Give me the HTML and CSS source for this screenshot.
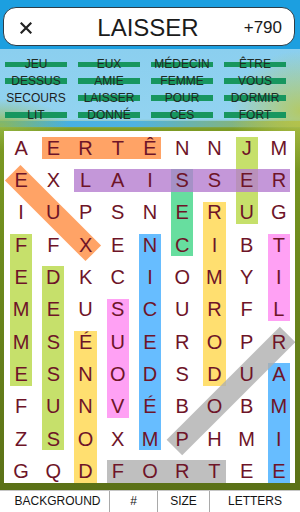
FILE: index.html
```html
<!DOCTYPE html>
<html lang="fr">
<head>
    <meta charset="UTF-8">
    <meta name="viewport" content="width=device-width, initial-scale=1.0">
    <title>Mots mêlés</title>
    <link rel="stylesheet" href="styles.css">
</head>
<body>
    <div class="app">
        <header class="top">
            <div class="pill">
                <span class="close">
                    <svg width="12" height="12" viewBox="0 0 12 12"><path d="M1.5 1.5 L10.5 10.5 M10.5 1.5 L1.5 10.5" stroke="#222" stroke-width="2.2" stroke-linecap="square"/></svg>
                </span>
                <span class="word">LAISSER</span>
                <span class="score">+790</span>
            </div>
        </header>

        <div class="scene">
            <section class="words">
                <span class="w found">JEU</span>
                <span class="w found">EUX</span>
                <span class="w found">MÉDECIN</span>
                <span class="w found">ÊTRE</span>
                <span class="w found">DESSUS</span>
                <span class="w found">AMIE</span>
                <span class="w found">FEMME</span>
                <span class="w found">VOUS</span>
                <span class="w">SECOURS</span>
                <span class="w found">LAISSER</span>
                <span class="w found">POUR</span>
                <span class="w found">DORMIR</span>
                <span class="w found">LIT</span>
                <span class="w found">DONNÉ</span>
                <span class="w found">CES</span>
                <span class="w found">FORT</span>
            </section>

            <div class="board">
                <!-- found words, drawn under the letters -->
                <div class="marks">
                    <div class="mark mint m-ces"></div>
                    <div class="mark lime m-jeu"></div>
                    <div class="mark orange m-etre"></div>
                    <div class="mark purple m-laisser"></div>
                    <div class="mark yellow m-dormir"></div>
                    <div class="mark pink m-lit"></div>
                    <div class="mark blue m-medecin"></div>
                    <div class="mark lime m-femme"></div>
                    <div class="mark lime m-dessus"></div>
                    <div class="mark yellow m-donne"></div>
                    <div class="mark pink m-vous"></div>
                    <div class="mark blue m-amie"></div>
                    <div class="mark gray m-fort"></div>
                    <div class="diag m-eux"><span class="bar orange down"></span></div>
                    <div class="diag m-pour"><span class="bar gray up"></span></div>
                </div>

                <div class="letters">
                    <span>A</span><span>E</span><span>R</span><span>T</span><span>Ê</span><span>N</span><span>N</span><span>J</span><span>M</span>
                    <span>E</span><span>X</span><span>L</span><span>A</span><span>I</span><span>S</span><span>S</span><span>E</span><span>R</span>
                    <span>I</span><span>U</span><span>P</span><span>S</span><span>N</span><span>E</span><span>R</span><span>U</span><span>G</span>
                    <span>F</span><span>F</span><span>X</span><span>E</span><span>N</span><span>C</span><span>I</span><span>B</span><span>T</span>
                    <span>E</span><span>D</span><span>K</span><span>C</span><span>I</span><span>O</span><span>M</span><span>Y</span><span>I</span>
                    <span>M</span><span>E</span><span>U</span><span>S</span><span>C</span><span>U</span><span>R</span><span>F</span><span>L</span>
                    <span>M</span><span>S</span><span>É</span><span>U</span><span>E</span><span>R</span><span>O</span><span>P</span><span>R</span>
                    <span>E</span><span>S</span><span>N</span><span>O</span><span>D</span><span>S</span><span>D</span><span>U</span><span>A</span>
                    <span>F</span><span>U</span><span>N</span><span>V</span><span>É</span><span>B</span><span>O</span><span>B</span><span>M</span>
                    <span>Z</span><span>S</span><span>O</span><span>X</span><span>M</span><span>P</span><span>H</span><span>M</span><span>I</span>
                    <span>G</span><span>Q</span><span>D</span><span>F</span><span>O</span><span>R</span><span>T</span><span>E</span><span>E</span>
                </div>
            </div>
        </div>

        <footer class="toolbar">
            <span class="tool first">BACKGROUND</span>
            <span class="tool">#</span>
            <span class="tool">SIZE</span>
            <span class="tool">LETTERS</span>
        </footer>
    </div>
</body>
</html>
```

FILE: styles.css
```css
* {
    box-sizing: border-box;
}
body {
    margin: 0;
    font-family: "Liberation Sans", Arial, sans-serif;
}
.app {
    width: 300px;
    height: 512px;
    display: flex;
    flex-direction: column;
    overflow: hidden;
}

/* header */
.top {
    height: 49px;
    background-color: #1c9fe0;
    padding: 7px 5px 3px 3px;
}
.pill {
    height: 39px;
    background: #fff;
    border: 1px solid #2c3d48;
    border-radius: 13px;
    display: grid;
    grid-template-columns: 1fr auto 1fr;
    align-items: center;
    padding: 2px 12px 0 16px;
    color: #1b1b1b;
}
.close {
    display: flex;
}
.word {
    font-size: 24px;
    margin-right: 6px;
}
.score {
    justify-self: end;
    font-size: 17px;
}

/* background picture: sky over hills */
.scene {
    flex: 1;
    display: flex;
    flex-direction: column;
    background:
        radial-gradient(70px 26px at 0 76px, rgba(150, 185, 70, 0.85), transparent),
        radial-gradient(70px 60px at 300px 62px, rgba(185, 200, 80, 0.85), transparent),
        linear-gradient(to right, #3eaee6, #4fb2e0 45%, #a3b542) 0 72px / 100% 6px no-repeat,
        linear-gradient(to bottom, #8bcfef 0, #92d3f0 70px, #7d9b24 80px, #6d8b1d 200px, #5b7117 100%);
}

/* word list */
.words {
    height: 78px;
    padding: 7px 0 0 5px;
    display: grid;
    grid-template-columns: repeat(4, 62px);
    grid-auto-rows: 17px;
    column-gap: 11px;
}
.w {
    font-size: 12px;
    line-height: 17px;
    text-align: center;
    color: #1d1d1d;
}
.found {
    background: linear-gradient(to bottom, transparent 5.5px, #17965f 5.5px, #17965f 11.5px, transparent 11.5px);
    color: #1f2b24;
}

/* grid */
.board {
    position: relative;
    height: 352px;
    margin: 4px 5px 7px 4px;
    padding: 1px 0 0 1px;
    background: #fff;
    overflow: hidden;
}
.marks,
.letters {
    display: grid;
    grid-template-columns: repeat(9, 1fr);
    grid-template-rows: repeat(11, 32.35px);
}
.marks {
    position: absolute;
    top: 1px;
    left: 1px;
    right: 0;
}
.letters {
    position: relative;
}
.letters span {
    display: flex;
    align-items: center;
    justify-content: center;
    font-size: 20px;
    color: #6e1428;
}

.mark {
    margin: 5px;
}
.diag {
    position: relative;
}
.bar {
    position: absolute;
    left: 50%;
    top: 50%;
    height: 22px;
}
.bar.down {
    width: 114px;
    transform: translate(-50%, -50%) rotate(45deg);
}
.bar.up {
    width: 160px;
    transform: translate(-50%, -50%) rotate(-45deg);
}

/* translucent marks: overlaps read slightly darker */
.orange { background: rgba(255, 140, 64, 0.8); }
.purple { background: rgba(181, 125, 207, 0.8); }
.gray   { background: rgba(175, 175, 175, 0.8); }
.lime   { background: rgba(184, 216, 70, 0.8); }
.mint   { background: rgba(65, 214, 135, 0.8); }
.yellow { background: rgba(255, 215, 76, 0.8); }
.pink   { background: rgba(255, 137, 241, 0.8); }
.blue   { background: rgba(65, 172, 255, 0.8); }

.m-etre    { grid-area: 1 / 2 / 2 / 6; }
.m-laisser { grid-area: 2 / 3 / 3 / 10; }
.m-fort    { grid-area: 11 / 4 / 12 / 8; }
.m-jeu     { grid-area: 1 / 8 / 4 / 9; }
.m-ces     { grid-area: 2 / 6 / 5 / 7; }
.m-dormir  { grid-area: 3 / 7 / 9 / 8; }
.m-lit     { grid-area: 4 / 9 / 7 / 10; }
.m-medecin { grid-area: 4 / 5 / 11 / 6; }
.m-femme   { grid-area: 4 / 1 / 9 / 2; }
.m-dessus  { grid-area: 5 / 2 / 11 / 3; }
.m-donne   { grid-area: 7 / 3 / 12 / 4; }
.m-vous    { grid-area: 6 / 4 / 10 / 5; }
.m-amie    { grid-area: 8 / 9 / 12 / 10; }
.m-eux     { grid-area: 2 / 1 / 5 / 4; }
.m-pour    { grid-area: 7 / 6 / 11 / 10; }

/* bottom bar */
.toolbar {
    height: 22px;
    display: grid;
    grid-template-columns: 109px 48px 52px 1fr;
    background: #fff;
    border-top: 1px solid #c6c6c6;
}
.tool {
    font-size: 12px;
    line-height: 21px;
    text-align: center;
    color: #141414;
    border-left: 1px solid #a9a9a9;
}
.tool.first {
    border-left: none;
    padding-left: 6px;
}
```
